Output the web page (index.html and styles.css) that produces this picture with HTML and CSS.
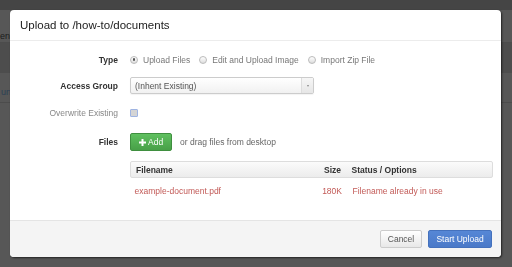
FILE: index.html
```html
<!DOCTYPE html>
<html>
<head>
<meta charset="utf-8">
<link rel="stylesheet" href="styles.css">
</head>
<body>
<div class="page">
  <div class="topbar"></div>
  <div class="prow first"><span class="ptext">ent</span></div>
  <div class="band"></div>
  <div class="prow second"><span class="ptext link">un</span></div>
</div>
<div class="modal">
  <div class="modal-header">Upload to /how-to/documents</div>
  <div class="modal-body">
    <div class="form-row row-type">
      <div class="label">Type</div>
      <div class="control radios">
        <span class="radio checked"></span><span class="opt">Upload Files</span>
        <span class="radio"></span><span class="opt">Edit and Upload Image</span>
        <span class="radio"></span><span class="opt">Import Zip File</span>
      </div>
    </div>
    <div class="form-row row-access">
      <div class="label">Access Group</div>
      <div class="control">
        <div class="select"><span class="select-text">(Inhent Existing)</span><span class="select-arrow"><span class="tri"></span></span></div>
      </div>
    </div>
    <div class="form-row row-overwrite">
      <div class="label light">Overwrite Existing</div>
      <div class="control"><span class="checkbox"></span></div>
    </div>
    <div class="form-row row-files">
      <div class="label">Files</div>
      <div class="control">
        <span class="btn-add"><svg class="plus" width="7" height="7" viewBox="0 0 7 7"><path d="M2.5 0h2v2.5H7v2H4.5V7h-2V4.5H0v-2h2.5z" fill="#fff"/></svg><span>Add</span></span>
        <span class="drag">or drag files from desktop</span>
      </div>
    </div>
    <div class="table-wrap">
      <div class="tbl">
        <div class="thead">
          <div class="c-name">Filename</div>
          <div class="c-size">Size</div>
          <div class="c-status">Status / Options</div>
        </div>
        <div class="trow">
          <div class="c-name">example-document.pdf</div>
          <div class="c-size">180K</div>
          <div class="c-status">Filename already in use</div>
        </div>
      </div>
    </div>
  </div>
  <div class="modal-footer">
    <span class="btn btn-default">Cancel</span>
    <span class="btn btn-primary">Start Upload</span>
  </div>
</div>
</body>
</html>
```

FILE: styles.css
```css
html, body {
  margin: 0;
  padding: 0;
  width: 512px;
  height: 267px;
  overflow: hidden;
  background: #575757;
  font-family: "Liberation Sans", Arial, sans-serif;
}
.page {
  width: 512px;
}
.topbar {
  height: 10px;
  background: #454545;
}
.prow {
  display: flex;
  box-sizing: border-box;
  border-bottom: 1px solid #4c4c4c;
}
.prow.first {
  height: 33px;
  align-items: flex-end;
  padding-bottom: 1px;
}
.prow.second {
  height: 30px;
  align-items: center;
  padding-top: 8px;
}
.band {
  height: 30px;
  background: #4d4d4d;
}
.ptext {
  font-size: 9px;
  color: #1c1c1c;
}
.ptext.link {
  color: #2c3f55;
  padding-left: 1px;
}
.modal {
  position: fixed;
  left: 10px;
  top: 10px;
  width: 491px;
  height: 247px;
  background: #fff;
  border-radius: 4px;
  box-shadow: 1px 1px 2px rgba(0,0,0,0.6);
  display: flex;
  flex-direction: column;
  overflow: hidden;
  color: #333;
  font-size: 8.5px;
}
.modal-header {
  height: 30px;
  flex: none;
  border-bottom: 1px solid #ececec;
  display: flex;
  align-items: center;
  padding-left: 10px;
  font-size: 11.5px;
  color: #222;
}
.modal-body {
  flex: 1;
  padding: 0 9px 0 10px;
}
.form-row {
  display: grid;
  grid-template-columns: 98px 1fr;
  column-gap: 12px;
  align-items: center;
}
.label {
  text-align: right;
  font-weight: bold;
  color: #333;
}
.label.light {
  font-weight: normal;
  color: #888;
}
.control {
  display: flex;
  align-items: center;
}
.row-type { margin-top: 9px; height: 19px; }
.row-access { margin-top: 8px; height: 17px; }
.row-overwrite { margin-top: 10px; height: 18px; }
.row-files { margin-top: 11px; height: 18px; }

.radios .opt {
  color: #777;
  margin-left: 5px;
  margin-right: 9px;
}
.radio {
  width: 6px;
  height: 6px;
  border-radius: 50%;
  border: 0.5px solid #bbb;
  background: linear-gradient(#fff, #ddd);
  position: relative;
  box-sizing: content-box;
}
.radio.checked::after {
  content: "";
  position: absolute;
  left: 1.75px;
  top: 1.75px;
  width: 2.5px;
  height: 2.5px;
  border-radius: 50%;
  background: #555;
}
.select {
  width: 184px;
  height: 17px;
  box-sizing: border-box;
  border: 1px solid #ccc;
  border-radius: 2px;
  background: linear-gradient(#fff, #f1f1f1);
  display: flex;
  align-items: center;
  box-shadow: 0 1px 1px rgba(0,0,0,0.05);
}
.select-text {
  flex: 1;
  padding-left: 4px;
  color: #555;
}
.select-arrow {
  width: 11px;
  height: 100%;
  border-left: 1px solid #ddd;
  background: linear-gradient(#f6f6f6, #e6e6e6);
  display: flex;
  align-items: center;
  justify-content: center;
}
.tri {
  width: 0;
  height: 0;
  border-left: 1.5px solid transparent;
  border-right: 1.5px solid transparent;
  border-top: 2px solid #888;
}
.checkbox {
  width: 6px;
  height: 6px;
  border: 1px solid #9fb4e2;
  background: #d4d4d4;
  border-radius: 1px;
}
.btn-add {
  width: 42px;
  height: 18px;
  box-sizing: border-box;
  border-radius: 2px;
  border: 1px solid #3f8f3f;
  background: linear-gradient(#5fc05f, #48a048);
  color: #fff;
  display: flex;
  align-items: center;
  padding-left: 8px;
  font-size: 8.5px;
}
.btn-add .plus {
  margin-right: 2px;
}
.drag {
  margin-left: 8px;
  color: #666;
}
.table-wrap {
  margin-top: 10px;
  padding-left: 110px;
}
.tbl {
  width: 363px;
}
.thead, .trow {
  display: grid;
  grid-template-columns: 1fr 40px 146px;
  align-items: center;
}
.thead {
  height: 17px;
  box-sizing: border-box;
  border: 1px solid #ddd;
  border-radius: 2px;
  background: linear-gradient(#fbfbfb, #ececec);
  font-weight: bold;
  color: #333;
}
.trow {
  height: 25px;
  color: #c25a57;
}
.c-name { padding-left: 5px; }
.trow .c-name { padding-left: 4.5px; }
.c-size { text-align: right; padding-right: 5px; }
.c-status { padding-left: 5.5px; }
.modal-footer {
  height: 36px;
  flex: none;
  border-top: 1px solid #e4e4e4;
  background: #f4f4f4;
  display: flex;
  align-items: center;
  justify-content: flex-end;
  padding-right: 9px;
  gap: 6px;
  padding-top: 0;
}
.btn {
  height: 18px;
  box-sizing: border-box;
  border-radius: 2px;
  display: flex;
  align-items: center;
  justify-content: center;
  font-size: 8.5px;
}
.btn-default {
  width: 42px;
  border: 1px solid #ccc;
  background: linear-gradient(#fff, #e8e8e8);
  color: #555;
}
.btn-primary {
  width: 64px;
  border: 1px solid #4471bd;
  background: linear-gradient(#5687d6, #4a79c8);
  color: #fff;
}
```
